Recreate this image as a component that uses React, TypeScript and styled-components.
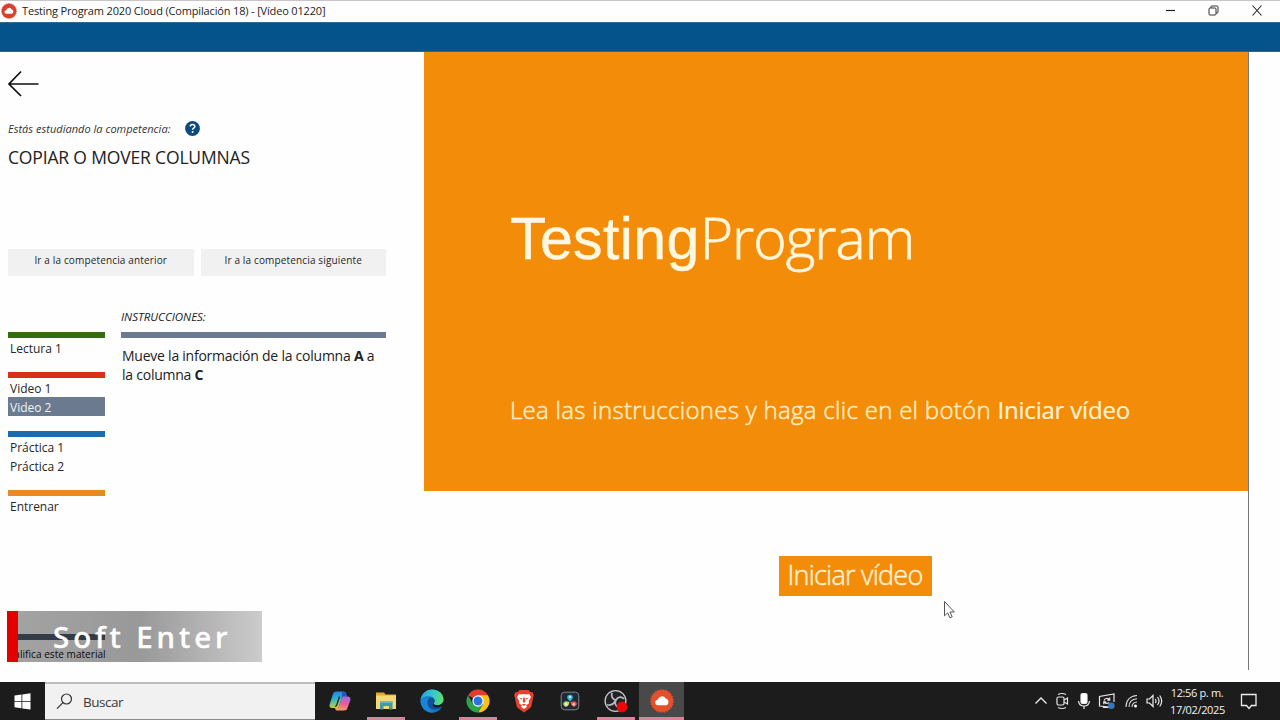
import * as React from "react";
import styled, { createGlobalStyle } from "styled-components";

const GlobalStyle = createGlobalStyle`
  * {
    box-sizing: border-box;
  }
  body {
    margin: 0;
    background: #fefefe;
    font-family: "Open Sans", "Noto Sans", sans-serif;
    color: #222;
    overflow: hidden;
  }
  svg {
    display: block;
    flex: none;
  }
`;

const Screen = styled.div`
  position: relative;
  width: 1280px;
  height: 720px;
  display: flex;
  flex-direction: column;
  overflow: hidden;
`;
const TitleBar = styled.header`
  height: 22px;
  display: flex;
  align-items: center;
  justify-content: space-between;
  padding: 0 17px 0 1px;
  border-top: 1px solid #c9c5c6;
  background: #fefefe;
`;
const WindowTitle = styled.div`
  display: flex;
  align-items: center;
  gap: 5px;
  padding-bottom: 2px;
  font-size: 11px;
  line-height: 20px;
  color: #1c1c1c;
  white-space: nowrap;
  span {
    letter-spacing: -0.16px;
  }
`;
const WindowButtons = styled.div`
  display: flex;
  align-items: center;
  gap: 32px;
  padding-bottom: 2px;
`;
const BlueBand = styled.div`
  height: 30px;
  background: #05538b;
  border-top: 1px solid #2c6c9b;
  border-bottom: 1px solid #3f5f7c;
`;
const Main = styled.main`
  height: 630px;
  display: flex;
`;

const Sidebar = styled.aside`
  width: 424px;
  padding: 18px 38px 0 8px;
  display: flex;
  flex-direction: column;
`;
const Studying = styled.div`
  display: flex;
  align-items: center;
  gap: 15px;
  height: 16px;
  margin-top: 23px;
  font-size: 11px;
  font-style: italic;
  color: #333;
  span {
    letter-spacing: 0.02px;
    white-space: nowrap;
  }
`;
const Competence = styled.h1`
  margin: 9px 0 0;
  height: 24px;
  line-height: 24px;
  font-size: 17.5px;
  font-weight: 400;
  letter-spacing: -0.16px;
  white-space: nowrap;
  color: #222;
`;
const NavButtons = styled.div`
  display: flex;
  gap: 7px;
  margin-top: 80px;
`;
const NavButton = styled.button`
  flex: 1;
  height: 27px;
  padding: 0 0 6px;
  border: 0;
  background: #f1f1f1;
  font-family: inherit;
  font-size: 10px;
  letter-spacing: 0.15px;
  color: #1f1f1f;
`;
const Columns = styled.div`
  display: flex;
  gap: 16px;
  margin-top: 32px;
`;
const Menu = styled.nav`
  width: 97px;
  padding-top: 24px;
`;
const MenuGroup = styled.div<{ $color: string; $gap?: number }>`
  border-top: 6px solid ${(p) => p.$color};
  margin-bottom: ${(p) => p.$gap ?? 15}px;
`;
const MenuItem = styled.div<{ $active?: boolean }>`
  height: 19px;
  line-height: 21px;
  padding-left: 2px;
  font-size: 12px;
  letter-spacing: -0.02px;
  white-space: nowrap;
  background: ${(p) => (p.$active ? "#6b7a8e" : "transparent")};
  color: ${(p) => (p.$active ? "#f2f5f8" : "#262626")};
`;
const Instructions = styled.section`
  width: 265px;
  h2 {
    margin: 0;
    height: 18px;
    line-height: 18px;
    font-size: 11.5px;
    font-style: italic;
    font-weight: 400;
    letter-spacing: 0;
  }
  hr {
    margin: 6px 0 8px;
    height: 6px;
    border: 0;
    background: #6b7a8e;
  }
  p {
    margin: 0 0 0 1px;
    font-size: 14px;
    line-height: 19px;
    letter-spacing: -0.24px;
    white-space: nowrap;
  }
`;
const Rate = styled.div`
  margin-top: auto;
  margin-bottom: 21px;
  width: 97px;
  border-top: 6px solid #51606f;
  font-size: 10px;
  line-height: 14px;
  padding-top: 7px;
  letter-spacing: 0.05px;
  color: #111;
  white-space: nowrap;
`;

const Stage = styled.section`
  width: 825px;
  height: 618px;
  border-right: 1px solid #777;
  display: flex;
  flex-direction: column;
  align-items: center;
`;
const Slide = styled.div`
  width: 824px;
  height: 439px;
  padding: 145px 0 0 86px;
  background: #f38c09;
  color: #fff8e0;
  white-space: nowrap;
`;
const Brand = styled.div`
  height: 80px;
  line-height: 80px;
  font-size: 57px;
  font-weight: 300;
  letter-spacing: -1px;
  -webkit-text-stroke: 0.8px #fff0cc;
  b {
    font-family: "Liberation Sans", Arial, sans-serif;
    font-weight: 400;
    font-size: 59px;
    letter-spacing: 0.4px;
    -webkit-text-stroke: 0.4px #fff8e0;
  }
`;
const Hint = styled.p`
  margin: 115px 0 0;
  line-height: 36px;
  font-size: 24px;
  font-weight: 300;
  letter-spacing: 0.29px;
  color: #ffedc4;
  -webkit-text-stroke: 0.5px #ffedc4;
  b {
    font-weight: 400;
    letter-spacing: -0.2px;
    color: #fff3d6;
    -webkit-text-stroke: 0.2px #fff3d6;
  }
`;
const StartButton = styled.button`
  margin: 65px 0 0 38px;
  width: 153px;
  height: 40px;
  padding: 0 0 2px;
  border: 0;
  background: #f38c09;
  color: #fff0cf;
  font-family: inherit;
  font-size: 27px;
  line-height: 36px;
  font-weight: 300;
  letter-spacing: -0.75px;
  -webkit-text-stroke: 0.5px #fff0cf;
  white-space: nowrap;
`;
const Pointer = styled.svg`
  position: absolute;
  left: 943px;
  top: 600px;
`;
const Caption = styled.div`
  position: absolute;
  left: 7px;
  top: 611px;
  width: 255px;
  height: 51px;
  border-left: 11px solid #e50000;
  padding-left: 35px;
  background: linear-gradient(
    90deg,
    rgba(0, 0, 0, 0.36) 0%,
    rgba(0, 0, 0, 0.4) 50%,
    rgba(0, 0, 0, 0.2) 100%
  );
  color: #fff;
  font-family: "Noto Sans", sans-serif;
  font-size: 29.5px;
  font-weight: 500;
  line-height: 52px;
  letter-spacing: 3.9px;
  -webkit-text-stroke: 0.4px #fff;
  white-space: nowrap;
`;

const Taskbar = styled.footer`
  height: 38px;
  display: flex;
  background: #1c1c1c;
`;
const StartMenu = styled.div`
  width: 45px;
  display: flex;
  align-items: center;
  justify-content: center;
`;
const Search = styled.div`
  width: 270px;
  display: flex;
  align-items: center;
  gap: 10px;
  padding-left: 11px;
  background: #f1f1f1;
  border-top: 2px solid #bcbcbc;
  border-bottom: 1px solid #8c8c8c;
  font-size: 13.5px;
  letter-spacing: -0.5px;
  color: #3a3a3a;
`;
const Apps = styled.div`
  display: flex;
  padding-left: 2px;
`;
const AppSlot = styled.div<{ $open?: boolean; $active?: boolean }>`
  width: ${(p) => (p.$active ? 45 : 46)}px;
  height: 38px;
  display: flex;
  flex-direction: column;
  align-items: center;
  justify-content: space-between;
  padding-top: 7px;
  background: ${(p) => (p.$active ? "#494949" : "transparent")};
  &::after {
    content: "";
    width: ${(p) => (p.$active ? 45 : 38)}px;
    height: 3px;
    background: ${(p) => (p.$open ? "#d9849a" : "transparent")};
  }
`;
const Tray = styled.div`
  margin-left: auto;
  display: flex;
  align-items: center;
`;
const TrayIcons = styled.div`
  display: flex;
  align-items: center;
  gap: 7.5px;
  margin-right: 7px;
`;
const Clock = styled.div`
  width: 54px;
  text-align: center;
  font-size: 11px;
  line-height: 17px;
  letter-spacing: -0.35px;
  padding-bottom: 1px;
  color: #f2f2f2;
  white-space: nowrap;
`;
const Notifications = styled.div`
  width: 56px;
  height: 38px;
  padding: 11px 0 0 16px;
`;

const CLOUD =
  "M8 16.2a2.7 2.7 0 0 1-.2-5.4 4.3 4.3 0 0 1 7.9-1.4 3.6 3.6 0 0 1 .8 6.8z";

const CloudLogo = ({ size, color }: { size: number; color: string }) => (
  <svg width={size} height={size} viewBox="0 0 24 24">
    <circle cx="12" cy="12" r="11" fill={color} />
    <circle cx="12" cy="12" r="11.2" fill="none" stroke={color} strokeWidth="1.2" strokeDasharray="1.6 1.2" />
    <path d={CLOUD} fill="#fff" />
  </svg>
);

const Copilot = () => (
  <svg width="24" height="24" viewBox="0 0 24 24">
    <defs>
      <linearGradient id="cpA" x1="0" y1="0" x2="0.2" y2="1">
        <stop offset="0" stopColor="#2475e8" />
        <stop offset="0.5" stopColor="#2fb5c9" />
        <stop offset="1" stopColor="#c6cf3f" />
      </linearGradient>
      <linearGradient id="cpB" x1="0.5" y1="0" x2="0.3" y2="1">
        <stop offset="0" stopColor="#a768e0" />
        <stop offset="0.5" stopColor="#ec5b9c" />
        <stop offset="1" stopColor="#f8a35c" />
      </linearGradient>
    </defs>
    <path d="M8.2 2.5h7.3c1.5 0 2.1.8 2.6 2.3l.8 2.7h-3c-1.2 0-1.9.7-2.3 2l-2.3 7.3c-.5 1.7-1.3 2.3-2.8 2.3H4.2c-2.3 0-3.2-1.5-2.5-3.8L5 4.9c.5-1.6 1.5-2.4 3.2-2.4z" fill="url(#cpA)" />
    <path d="M14 3h1.8c1.3 0 1.9.8 2.3 2l.8 2.5h-3.1c-1.2 0-1.9.7-2.3 2z" fill="#2456c8" />
    <path d="M15.8 7.5h3.8c2.4 0 3.4 1.6 2.7 3.9L19.5 19c-.6 1.8-1.6 2.5-3.3 2.5H9.5c-1.4 0-2-.7-2.4-2.1l-.1-.3h1.5c1.4 0 2.2-.7 2.7-2.3l2.4-7.3c.4-1.3 1-2 2.2-2z" fill="url(#cpB)" />
    <path d="m11.5 7.5-2.6 8.3c-.4 1.2-.9 1.7-2 1.7" fill="none" stroke="#1c1c1c" strokeWidth="1.2" />
  </svg>
);

const Explorer = () => (
  <svg width="24" height="24" viewBox="0 0 24 24">
    <path d="M2 3.5h8l1.5 2H22V20H2z" fill="#e4a92e" />
    <path d="M2 6.5h20V20H2z" fill="#f5d774" />
    <path d="M6 12.5h12.5v8H15V17H9.5v3.5H6z" fill="#4598a8" />
    <path d="M6 12.5h12.5v1.500H6z" fill="#69b6c3" />
  </svg>
);

const Edge = () => (
  <svg width="24" height="24" viewBox="0 0 24 24">
    <defs>
      <linearGradient id="edA" x1="0" y1="0.2" x2="1" y2="0.4">
        <stop offset="0" stopColor="#22a0df" />
        <stop offset="0.55" stopColor="#35c8cb" />
        <stop offset="1" stopColor="#62dc6c" />
      </linearGradient>
    </defs>
    <circle cx="12" cy="12" r="11.5" fill="#1676c9" />
    <path d="M.6 11.8C1 5.4 5.9.5 12 .5c6.6 0 11.5 4.4 11.5 9.7 0 3.8-2.9 6-6.2 6-2.4 0-3.6-.8-3.6-1.7 0-.7 1-1.1 1-2.8 0-2.3-2.3-4.5-6-4.5-4 0-7.2 2-8.1 4.6z" fill="url(#edA)" />
    <path d="M7.5 13.5c0-2.4 1.3-4.2 3.3-5-4-.8-8.6.8-10.2 3.8C.8 18.5 6 23.5 12 23.5c.8 0 1.5 0 2.2-.2-4-.9-6.7-5-6.7-9.8z" fill="#1785d8" />
    <path d="M7.5 13.5c0-2.3 1.2-4 3-4.9 2.7.1 4.2 1.700 4.200 3.200 0 1.500-1 2-1 2.700 0 .9 1.200 1.700 3.600 1.700 2 0 3.500-.5 4.800-1.500v2c-1 1.800-2.400 2.800-4.500 3.600-5.500 1.300-10.100-2.200-10.100-6.800z" fill="#114f96" />
    <path d="M13.7 14.5c0 .9 1.200 1.700 3.600 1.700 2.600 0 4.900-1.300 5.800-3.500l.9 3.800-2.500 1.200c-3 1.300-7.600 1-8.800-1.500z" fill="#1c1c1c" />
  </svg>
);

const Chrome = () => (
  <svg width="24" height="24" viewBox="0 0 24 24">
    <path d="M12 12 2.04 6.25A11.5 11.5 0 0 1 21.96 6.25z" fill="#e33b2e" />
    <path d="M12 6.25h9.96A11.5 11.5 0 0 1 12 23.5l5-8.6z" fill="#fbc116" />
    <path d="M7 14.9 2.04 6.25A11.5 11.5 0 0 0 12 23.5l5-8.6z" fill="#2da14c" />
    <circle cx="12" cy="12" r="5.7" fill="#fff" />
    <circle cx="12" cy="12" r="4.5" fill="#2d73e4" />
  </svg>
);

const Brave = () => (
  <svg width="22" height="24" viewBox="0 0 22 24">
    <path d="M6.5 1h9l2 2.2 2-.1 1.3 3-.6 2.2-1.7 8.5c-.3 1.3-1 2-2 2.8L11 23.5l-5.500-3.900c-1-.8-1.700-1.500-2-2.800L1.800 8.300l-.6-2.200 1.300-3 2 .1z" fill="#e8402a" />
    <path d="m6 5 2.500.6L11 5l2.500.6L16 5l2 3-2.300 4.300.3 2-3 2.200 1 1.300L11 20l-3-2.200 1-1.300-3-2.200.3-2L4 8z" fill="#fff" />
    <path d="m6 8.700 3.400.6-.7 1.300zM16 8.700l-3.400.6.7 1.300zM10.300 8.500h1.400l.6 4.500-1.300.7-1.300-.7zM8.600 15.800l2.400-1 2.400 1-2.400 1z" fill="#e8402a" />
  </svg>
);

const Resolve = () => (
  <svg width="22" height="24" viewBox="0 0 22 24">
    <rect x="2.200" y="3.200" width="17.600" height="17.600" rx="3.500" fill="#202a34" stroke="#7a8790" strokeWidth="1" />
    <path d="M11 12.500c-2.400-2-3.300-3.500-2.700-5.200.7-2 4.700-2 5.400 0 .6 1.700-.3 3.200-2.700 5.200z" fill="#36b2d8" />
    <path d="M10.500 13c-.5 3-1.400 4.400-3.200 4.700-2 .4-3.900-2.700-2.600-4.300 1.100-1.400 2.900-1.400 5.800-.4z" fill="#b7d565" />
    <path d="M11.500 13c.5 3 1.400 4.400 3.200 4.700 2 .4 3.900-2.700 2.600-4.300-1.100-1.400-2.900-1.400-5.800-.4z" fill="#e4534e" />
    <circle cx="11" cy="8" r="1.200" fill="#d5f3fc" />
    <circle cx="7.200" cy="15.300" r="1.200" fill="#f4fbd9" />
    <circle cx="14.800" cy="15.300" r="1.200" fill="#fbd8d5" />
  </svg>
);

const Obs = () => (
  <svg width="24" height="24" viewBox="0 0 24 24">
    <circle cx="11.500" cy="12" r="10.400" fill="#242228" stroke="#c9c9c9" strokeWidth="1.300" />
    <path d="M8 3.800c-1 3.500.6 6.500 4.200 7.700M20 9.800c-2.600-2.700-6-2.300-8 1.200-1.400 2.700-.5 5.700 2 7.400M3 15.700c3.600 1 6.700-.4 8.200-4" fill="none" stroke="#b9b9b9" strokeWidth="1.700" />
    <circle cx="18" cy="18" r="5.400" fill="#ee0505" />
  </svg>
);

const menu = [
  { color: "#356c10", items: ["Lectura 1"], gap: 15 },
  { color: "#d9301a", items: ["Video 1", "Video 2"], gap: 15 },
  { color: "#1b6cae", items: ["Práctica 1", "Práctica 2"], gap: 15 },
  { color: "#e88a20", items: ["Entrenar"], gap: 0 },
];

const apps = [
  { icon: <Copilot /> },
  { icon: <Explorer />, open: true },
  { icon: <Edge /> },
  { icon: <Chrome />, open: true },
  { icon: <Brave /> },
  { icon: <Resolve /> },
  { icon: <Obs />, open: true },
  { icon: <CloudLogo size={24} color="#e5502b" />, open: true, active: true },
];

const App: React.FC = () => {
  return (
    <Screen>
      <GlobalStyle />
      <TitleBar>
        <WindowTitle>
          <CloudLogo size={16} color="#d93f2b" />
          <span>Testing Program 2020 Cloud (Compilación 18) - [Vídeo 01220]</span>
        </WindowTitle>
        <WindowButtons>
          <svg width="11" height="11" viewBox="0 0 11 11">
            <path d="M1 5.500h9" stroke="#222" strokeWidth="1.200" />
          </svg>
          <svg width="11" height="11" viewBox="0 0 11 11" fill="none" stroke="#333">
            <rect x="1" y="3" width="7" height="7" rx="1" />
            <path d="M3 3V1.500Q3 1 3.500 1H9q1 0 1 1v5q0 1-1 1H8" />
          </svg>
          <svg width="12" height="11" viewBox="0 0 12 11">
            <path d="m1.500.5 9 10m0-10-9 10" stroke="#222" strokeWidth="1.100" />
          </svg>
        </WindowButtons>
      </TitleBar>
      <BlueBand />

      <Main>
        <Sidebar>
          <svg width="31" height="27" viewBox="0 0 31 27" fill="none" stroke="#111" strokeWidth="1.700">
            <path d="M13 1.500 1 14l12 12M1 14h29.500" />
          </svg>
          <Studying>
            <span>Estás estudiando la competencia:</span>
            <svg width="15" height="15" viewBox="0 0 15 15">
              <circle cx="7.500" cy="7.500" r="7.400" fill="#0b4b80" />
              <path d="M5.300 5.600c0-1.300.9-2.100 2.200-2.100s2.300.8 2.300 2c0 1.600-2.200 1.600-2.200 3.300" fill="none" stroke="#fff" strokeWidth="1.500" />
              <circle cx="7.600" cy="11.100" r="1" fill="#fff" />
            </svg>
          </Studying>
          <Competence>COPIAR O MOVER COLUMNAS</Competence>
          <NavButtons>
            <NavButton>Ir a la competencia anterior</NavButton>
            <NavButton>Ir a la competencia siguiente</NavButton>
          </NavButtons>
          <Columns>
            <Menu>
              {menu.map((group) => (
                <MenuGroup key={group.color} $color={group.color} $gap={group.gap}>
                  {group.items.map((item) => (
                    <MenuItem key={item} $active={item === "Video 2"}>
                      {item}
                    </MenuItem>
                  ))}
                </MenuGroup>
              ))}
            </Menu>
            <Instructions>
              <h2>INSTRUCCIONES:</h2>
              <hr />
              <p>
                Mueve la información de la columna <b>A</b> a
                <br />
                la columna <b>C</b>
              </p>
            </Instructions>
          </Columns>
          <Rate>Califica este material</Rate>
        </Sidebar>

        <Stage>
          <Slide>
            <Brand>
              <b>Testing</b>Program
            </Brand>
            <Hint>
              Lea las instrucciones y haga clic en el botón <b>Iniciar vídeo</b>
            </Hint>
          </Slide>
          <StartButton>Iniciar vídeo</StartButton>
        </Stage>
      </Main>

      <Taskbar>
        <StartMenu>
          <svg width="17" height="17" viewBox="0 0 17 17" fill="#fff">
            <path d="M.5 2.500 7.500 1.500V8h-7zM8.300 1.400 16.500.300V8H8.300zM.5 8.800h7v6.500l-7-1zM8.300 8.800h8.200v7.800l-8.200-1.200z" />
          </svg>
        </StartMenu>
        <Search>
          <svg width="17" height="17" viewBox="0 0 17 17" fill="none" stroke="#333" strokeWidth="1.200">
            <circle cx="10.500" cy="6" r="5" />
            <path d="M7 9.600 1 15.600" />
          </svg>
          <span>Buscar</span>
        </Search>
        <Apps>
          {apps.map((app, i) => (
            <AppSlot key={i} $open={app.open} $active={app.active}>
              {app.icon}
            </AppSlot>
          ))}
        </Apps>
        <Tray>
          <TrayIcons>
            <svg width="14" height="16" viewBox="0 0 14 16" fill="none" stroke="#eee" strokeWidth="1.300">
              <path d="m1.500 10.500 5.500-5.500 5.500 5.500" />
            </svg>
            <svg width="14" height="18" viewBox="0 0 14 18" fill="none" stroke="#e4e4e4" strokeWidth="1.200">
              <rect x="2" y="5" width="7" height="8" rx="1.500" />
              <path d="m9 8 3.500-2v6L9 10M3 2.500q4-2 8 0M3 15.500q4 2 8 0" />
            </svg>
            <svg width="14" height="18" viewBox="0 0 14 18" fill="none" stroke="#eee" strokeWidth="1.200">
              <rect x="4" y="1.500" width="6" height="10" rx="1.500" fill="#fff" />
              <path d="M1.500 9c.3 3.500 2.500 5 5.500 5s5.200-1.500 5.500-5M7 14v3" />
            </svg>
            <svg width="18" height="18" viewBox="0 0 18 18" fill="none" stroke="#e8e8e8" strokeWidth="1.200">
              <path d="M11 15 1.500 14V4.500L16 2v8M5 15.500h6" />
              <path d="M6 8.500c.8-2.300 4-2.800 5.500-.7M11.700 5.500v2.600H9.200M11 10.300c-1.200 1.500-3.600 1.500-4.700-.3M5.800 12.300V9.800h2.400" />
              <circle cx="13.300" cy="13.800" r="3.300" fill="#3478c0" stroke="none" />
            </svg>
            <svg width="15" height="16" viewBox="0 0 15 16" fill="none" stroke="#ddd" strokeWidth="1.100">
              <path d="M2 14C2 7.500 6 3 13 2.500M5 14c0-5 3-8 8-8.300M8 14c0-3 2-5 5-5" />
              <circle cx="11.500" cy="13" r="1.500" fill="#fff" stroke="none" />
            </svg>
            <svg width="17" height="16" viewBox="0 0 17 16" fill="none" stroke="#eee" strokeWidth="1.200">
              <path d="M1 6h2.500L7 2.500v11L3.500 10H1zM9.300 6q1.500 2 0 4M11.500 4q3 4 0 8M13.700 2.500q4 5.500 0 11" />
            </svg>
          </TrayIcons>
          <Clock>
            12:56 p. m.
            <br />
            17/02/2025
          </Clock>
          <Notifications>
            <svg width="18" height="18" viewBox="0 0 18 18" fill="none" stroke="#eee" strokeWidth="1.300">
              <path d="M1.500 1.500h14.500v11h-4.500L9 15.500l-2.500-3h-5z" />
            </svg>
          </Notifications>
        </Tray>
      </Taskbar>

      <Caption>Soft Enter</Caption>
      <Pointer width="13" height="20" viewBox="0 0 13 20">
        <path d="M1.500 1.500v14.300l3.200-3 2.200 5 2.300-1-2.200-4.800h4.300z" fill="#fff" stroke="#555" strokeWidth="1" />
      </Pointer>
    </Screen>
  );
};

export default App;
